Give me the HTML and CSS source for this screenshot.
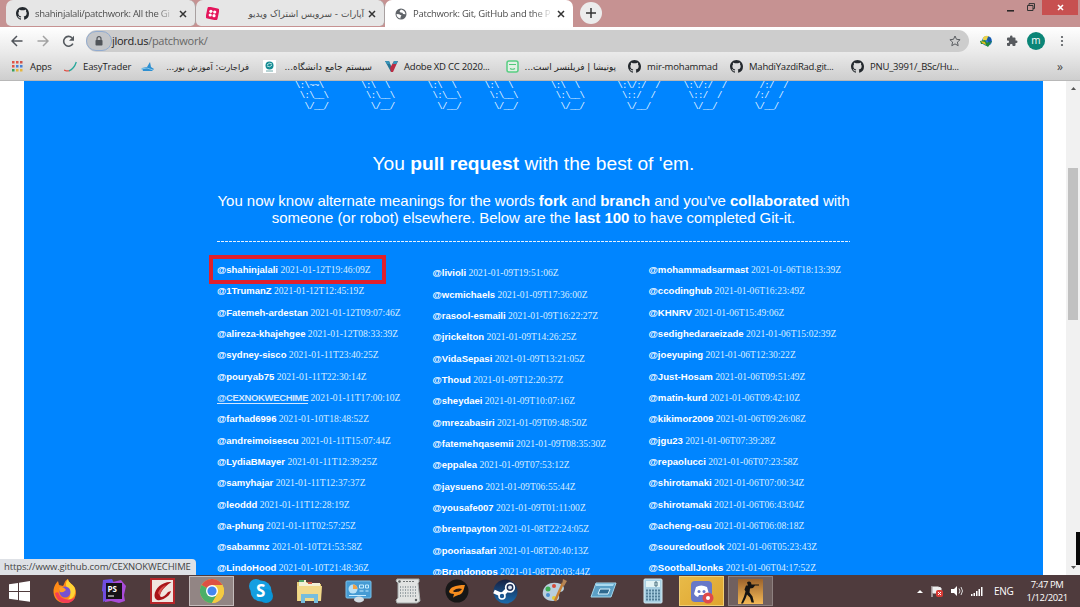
FILE: index.html
```html
<!DOCTYPE html>
<html lang="en">
<head>
<meta charset="utf-8">
<title>Patchwork: Git, GitHub and the People</title>
<link rel="stylesheet" href="styles.css">
</head>
<body>
<svg class="defs" width="0" height="0">
  <symbol id="github" viewBox="0 0 16 16"><path d="M8 0C3.58 0 0 3.58 0 8c0 3.54 2.29 6.53 5.47 7.59.4.07.55-.17.55-.38 0-.19-.01-.82-.01-1.49-2.01.37-2.53-.49-2.69-.94-.09-.23-.48-.94-.82-1.13-.28-.15-.68-.52-.01-.53.63-.01 1.08.58 1.23.82.72 1.21 1.87.87 2.33.66.07-.52.28-.87.51-1.07-1.78-.2-3.64-.89-3.64-3.95 0-.87.31-1.59.82-2.15-.08-.2-.36-1.02.08-2.12 0 0 .67-.21 2.2.82.64-.18 1.32-.27 2-.27s1.36.09 2 .27c1.53-1.04 2.2-.82 2.2-.82.44 1.1.16 1.92.08 2.12.51.56.82 1.27.82 2.15 0 3.07-1.87 3.75-3.65 3.95.29.25.54.73.54 1.48 0 1.07-.01 1.93-.01 2.2 0 .21.15.46.55.38A8.01 8.01 0 0 0 16 8c0-4.42-3.58-8-8-8z" fill="#24292e"/></symbol>
  <symbol id="close" viewBox="0 0 8 8"><path d="M1 1l6 6M7 1L1 7" stroke="#333" stroke-width="1.5"/></symbol>
</svg>
<header class="tabstrip">
  <div class="tab">
    <svg class="favicon" width="13" height="13"><use href="#github"/></svg>
    <span class="tab-title t1">shahinjalali/patchwork: All the Gi</span>
    <svg width="8" height="8"><use href="#close"/></svg>
  </div>
  <div class="tab second">
    <svg class="favicon" width="13" height="13" viewBox="0 0 13 13"><rect x=".5" y=".5" width="12" height="12" rx="2" fill="#e4155b" transform="rotate(12 6.500 6.500)"/><g fill="#fff"><circle cx="4.900" cy="4.300" r="1.600"/><circle cx="8.700" cy="5" r="1.600"/><circle cx="4.200" cy="8" r="1.600"/><circle cx="8" cy="8.700" r="1.600"/></g></svg>
    <span class="tab-title t2" dir="rtl">آپارات - سرویس اشتراک ویدیو</span>
    <svg width="8" height="8"><use href="#close"/></svg>
  </div>
  <div class="tab active">
    <svg class="favicon" width="12" height="12" viewBox="0 0 12 12"><circle cx="6" cy="6" r="5.500" fill="#5f6368"/><path d="M6 1.500L4.500 3.200l1 1.300 2 .2L8 6l2.500.3C10.300 4 9 2 6 1.500zM1.500 6L4 6.300 6.500 7.500 5.500 9v1.500C3 10.300 1.500 8.300 1.500 6z" fill="#fff"/></svg>
    <span class="tab-title t3">Patchwork: Git, GitHub and the P</span>
    <svg width="8" height="8"><use href="#close"/></svg>
  </div>
  <div class="new-tab"><svg width="10" height="10"><path d="M5 0v10M0 5h10" stroke="#333" stroke-width="1.500"/></svg></div>
  <div class="window-buttons">
    <svg width="7" height="8"><path d="M0 6.800h7" stroke="#222" stroke-width="1.500"/></svg>
    <svg width="8" height="9"><path d="M.5 2.500h5.500v5H.5zM2 2.500V.6h5.500v5H6" fill="none" stroke="#333"/></svg>
    <div class="window-close"><svg width="7" height="7"><path d="M1 1l5 5M6 1L1 6" stroke="#fff" stroke-width="1.600"/></svg></div>
  </div>
</header>
<div class="chrome-bars">
  <nav class="toolbar">
    <svg width="12" height="12"><path d="M11.500 6H1.500M6 1L1 6l5 5" fill="none" stroke="#50545a" stroke-width="1.500"/></svg>
    <svg class="forward" width="12" height="12"><path d="M.5 6h10M6 1l5 5-5 5" fill="none" stroke="#a2a2a2" stroke-width="1.500"/></svg>
    <svg class="reload" width="13" height="13"><path d="M10.900 8.600A4.900 4.900 0 1 1 10 2.800" fill="none" stroke="#555a5f" stroke-width="1.600"/><path d="M12 .8V5.700H7z" fill="#555a5f"/></svg>
    <div class="omnibox">
      <span class="lock"><svg width="8" height="10"><rect x=".5" y="4" width="7" height="5.500" rx=".8" fill="#505459"/><path d="M2 4V2.700a2 2 0 0 1 4 0V4" fill="none" stroke="#505459" stroke-width="1.200"/></svg></span>
      <span class="url"><b>jlord.us</b>/patchwork/</span>
      <svg class="star" width="12" height="12" viewBox="0 0 12 12"><path d="M6 1l1.500 3.300 3.600.4-2.700 2.400.8 3.600L6 8.900l-3.200 1.800.8-3.600L.9 4.700l3.600-.4z" fill="none" stroke="#5a5d61"/></svg>
    </div>
    <div class="extensions">
      <svg width="13" height="13" viewBox="0 0 13 13"><circle cx="7" cy="6" r="5" fill="#2f7bd0"/><path d="M3 2.500a5 5 0 0 1 6-1L6.500 5 3 6z" fill="#ead34b"/><path d="M0 6l5-1 2 3 2-2 3 0-4 6-4-3-3 0z" fill="#238a3a"/><path d="M8 1.500l3 1.500v4L9 7.500 7 5z" fill="#1757a8"/><path d="M1 6l4 1 1 3-4-2z" fill="#e1bd24"/></svg>
      <svg width="12" height="12" viewBox="0 0 24 24"><path d="M20.500 11H19V7a2 2 0 0 0-2-2h-4V3.500a2.500 2.500 0 0 0-5 0V5H4a2 2 0 0 0-2 2v3.800h1.500a2.700 2.700 0 0 1 0 5.400H2V20a2 2 0 0 0 2 2h3.800v-1.500a2.700 2.700 0 0 1 5.400 0V22H17a2 2 0 0 0 2-2v-4h1.500a2.500 2.500 0 0 0 0-5z" fill="#575a5e"/></svg>
      <span class="avatar">m</span>
      <svg width="4" height="12"><g fill="#55595d"><circle cx="2" cy="2" r="1.100"/><circle cx="2" cy="6" r="1.100"/><circle cx="2" cy="10" r="1.100"/></g></svg>
    </div>
  </nav>
  <nav class="bookmarks">
    <div class="bm apps"><svg width="13" height="13"><g><path d="M1 1h2.500v2.500H1zM5 1h2.500v2.500H5zM1 5h2.500v2.500H1z" fill="#df5548"/><path d="M9 1h2.500v2.500H9z" fill="#cf5148"/><path d="M5 5h2.500v2.500H5zM9 5h2.500v2.500H9z" fill="#477fd5"/><path d="M1 9h2.500v2.500H1z" fill="#35a05c"/><path d="M5 9h2.500v2.500H5zM9 9h2.500v2.500H9z" fill="#e5b53c"/></g></svg><span>Apps</span></div>
    <div class="bm easy"><svg width="13" height="13"><path d="M0 10Q4 11.500 6 10.500" stroke="#df5146" stroke-width="1.300" fill="none"/><path d="M5 10.800Q10 9 12.300 2" stroke="#26a79a" stroke-width="1.300" fill="none"/></svg><span>EasyTrader</span></div>
    <div class="bm fara"><svg width="13" height="13"><path d="M1 8l5-1 3-5 1 5 3 2-2 2H2z" fill="#2d8fd1"/><path d="M0 9l6-1 6 2" stroke="#83c4e8" fill="none"/></svg><span dir="rtl">فراجارت: آموزش بور...</span></div>
    <div class="bm uni"><svg width="13" height="13"><path fill="#fff" d="M0 0h13v13H0z"/><circle cx="6.500" cy="5.500" r="4" fill="#168c94"/><path d="M4 5q2-3 5-1M4 6q3 2 5-1" stroke="#b9e4e4" fill="none"/><path d="M3 11h7" stroke="#6ba6aa"/></svg><span dir="rtl">سیستم جامع دانشگاه...</span></div>
    <div class="bm adobe"><svg width="13" height="13"><path d="M0 1h4l2.500 6L6 12z" fill="#257596"/><path d="M6 12L5 8 9 1h4L8 12z" fill="#b92c44"/><path d="M0 1h4l1 3H2zM9 1h4l-1.500 3H7.500z" fill="#3993b7"/></svg><span>Adobe XD CC 2020...</span></div>
    <div class="bm poni"><svg width="13" height="13"><rect x="1" y="1" width="11" height="11" rx="2" fill="#e2f0e5" stroke="#58ce82" stroke-width="1.500"/><path d="M3 4.500h7M4 8.500q2.500 1.500 5 0" fill="none" stroke="#50c87b" stroke-width="1.200"/></svg><span dir="rtl">پونیشا | فریلنسر است...</span></div>
    <div class="bm mir"><svg width="13" height="13"><use href="#github"/></svg><span>mir-mohammad</span></div>
    <div class="bm mahdi"><svg width="13" height="13"><use href="#github"/></svg><span>MahdiYazdiRad.git...</span></div>
    <div class="bm pnu"><svg width="13" height="13"><use href="#github"/></svg><span>PNU_3991/_BSc/Hu...</span></div>
    <span class="more">»</span>
  </nav>
</div>
<div class="viewport">
  <main class="page">
<pre class="banner">\:\~~\        \:\  \        \:\  \      \:\  \        \:\  \        \:\/:/  /     \:\/:/  /       /:/  /
 \:\__\        \:\__\        \:\__\      \:\__\        \:\__\        \::/  /       \::/  /       /:/  /
  \/__/         \/__/         \/__/       \/__/         \/__/         \/__/         \/__/        \/__/</pre>
    <h1>You <b>pull request</b> with the best of 'em.</h1>
    <p class="intro">You now know alternate meanings for the words <b>fork</b> and <b>branch</b> and you've <b>collaborated</b> with<br>someone (or robot) elsewhere. Below are the <b>last 100</b> to have completed Git-it.</p>
    <svg class="rule" width="633" height="1"><path d="M0 .5h633" stroke="#e4f2ff" stroke-dasharray="3 1"/></svg>
    <div class="people">
      <ul>
        <li class="marked"><a>@shahinjalali</a> 2021-01-12T19:46:09Z</li>
        <li><a>@1TrumanZ</a> 2021-01-12T12:45:19Z</li>
        <li><a>@Fatemeh-ardestan</a> 2021-01-12T09:07:46Z</li>
        <li><a>@alireza-khajehgee</a> 2021-01-12T08:33:39Z</li>
        <li><a>@sydney-sisco</a> 2021-01-11T23:40:25Z</li>
        <li><a>@pouryab75</a> 2021-01-11T22:30:14Z</li>
        <li><a class="hover">@CEXNOKWECHIME</a> 2021-01-11T17:00:10Z</li>
        <li><a>@farhad6996</a> 2021-01-10T18:48:52Z</li>
        <li><a>@andreimoisescu</a> 2021-01-11T15:07:44Z</li>
        <li><a>@LydiaBMayer</a> 2021-01-11T12:39:25Z</li>
        <li><a>@samyhajar</a> 2021-01-11T12:37:37Z</li>
        <li><a>@leoddd</a> 2021-01-11T12:28:19Z</li>
        <li><a>@a-phung</a> 2021-01-11T02:57:25Z</li>
        <li><a>@sabammz</a> 2021-01-10T21:53:58Z</li>
        <li><a>@LindoHood</a> 2021-01-10T21:48:36Z</li>
      </ul>
      <ul class="lower">
        <li><a>@livioli</a> 2021-01-09T19:51:06Z</li>
        <li><a>@wcmichaels</a> 2021-01-09T17:36:00Z</li>
        <li><a>@rasool-esmaili</a> 2021-01-09T16:22:27Z</li>
        <li><a>@jrickelton</a> 2021-01-09T14:26:25Z</li>
        <li><a>@VidaSepasi</a> 2021-01-09T13:21:05Z</li>
        <li><a>@Thoud</a> 2021-01-09T12:20:37Z</li>
        <li><a>@sheydaei</a> 2021-01-09T10:07:16Z</li>
        <li><a>@mrezabasiri</a> 2021-01-09T09:48:50Z</li>
        <li><a>@fatemehqasemii</a> 2021-01-09T08:35:30Z</li>
        <li><a>@eppalea</a> 2021-01-09T07:53:12Z</li>
        <li><a>@jaysueno</a> 2021-01-09T06:55:44Z</li>
        <li><a>@yousafe007</a> 2021-01-09T01:11:00Z</li>
        <li><a>@brentpayton</a> 2021-01-08T22:24:05Z</li>
        <li><a>@pooriasafari</a> 2021-01-08T20:40:13Z</li>
        <li><a>@Brandonops</a> 2021-01-08T20:03:44Z</li>
      </ul>
      <ul class="third">
        <li><a>@mohammadsarmast</a> 2021-01-06T18:13:39Z</li>
        <li><a>@ccodinghub</a> 2021-01-06T16:23:49Z</li>
        <li><a>@KHNRV</a> 2021-01-06T15:49:06Z</li>
        <li><a>@sedighedaraeizade</a> 2021-01-06T15:02:39Z</li>
        <li><a>@joeyuping</a> 2021-01-06T12:30:22Z</li>
        <li><a>@Just-Hosam</a> 2021-01-06T09:51:49Z</li>
        <li><a>@matin-kurd</a> 2021-01-06T09:42:10Z</li>
        <li><a>@kikimor2009</a> 2021-01-06T09:26:08Z</li>
        <li><a>@jgu23</a> 2021-01-06T07:39:28Z</li>
        <li><a>@repaolucci</a> 2021-01-06T07:23:58Z</li>
        <li><a>@shirotamaki</a> 2021-01-06T07:00:34Z</li>
        <li><a>@shirotamaki</a> 2021-01-06T06:43:04Z</li>
        <li><a>@acheng-osu</a> 2021-01-06T06:08:18Z</li>
        <li><a>@souredoutlook</a> 2021-01-06T05:23:43Z</li>
        <li><a>@SootballJonks</a> 2021-01-06T04:17:52Z</li>
      </ul>
    </div>
  </main>
  <div class="scrollbar">
    <svg width="7" height="5"><path d="M1 4l2.500-3L6 4z" fill="#555"/></svg>
    <div class="thumb"></div>
    <svg width="7" height="5"><path d="M1 1l2.500 3L6 1z" fill="#555"/></svg>
  </div>
  <div class="edge-widget"></div>
  <div class="status">https://www.github.com/CEXNOKWECHIME</div>
</div>
<footer class="taskbar">
  <div class="start"><svg width="22" height="21"><path d="M0 3.200l9-1.300v8.100H0zM10 1.700L21 0v10H10zM0 11h9v8L0 17.800zM10 11h11v9.800L10 19.200z" fill="#fff"/></svg></div>
  <div class="task"><svg width="26" height="26" viewBox="0 0 26 26"><path d="M13 25C5 25 1 19 1.500 12 2 8 4 5 6 3l1 4 4 1c2-3 1-5 5-7 0 4 5 5 7 9 3 7-1 15-10 15z" fill="#ff8a16"/><path d="M16 1c0 4 6 5 7 10 1 5-2 11-8 11 5-3 4-9 0-12-1-3-2-5 1-9z" fill="#ffd536"/><path d="M3 15c1 6 5 10 11 10 4 0 8-2 9-6-4 4-12 3-15-1-2-3-1-5-5-3z" fill="#f33e57"/><circle cx="13" cy="14" r="5.500" fill="#7651d2"/><path d="M7 10c2-2 5-1 7 2-2 1-2 3-6 2z" fill="#ff9d27"/></svg></div>
  <div class="task"><svg width="26" height="26" viewBox="0 0 26 26"><path d="M2 2l9-1 2 4-9 10-3-2z" fill="#6b52ee"/><path d="M12 4l8-2 5 6-2 9 1 6-6 2-8-2-6 1-2-11z" fill="#a94bd9"/><path d="M2 2l9 3-5 17-4 2z" fill="#704ddf"/><path d="M5 5h16v16H5z" fill="#161216"/><text x="6.500" y="14" class="ps">PS</text><path d="M7 18h6" stroke="#fff"/></svg></div>
  <div class="task"><svg width="25" height="26"><path d="M1 1h23v24H1z" fill="#f0e5df" stroke="#b5262a" stroke-width="2"/><path d="M21.500 4C13 3 5 10 4.500 17c0 6 5 6 9 4 4-2 7-5 7.500-8l-3 1c-2 3-5 5-7 5-3-1 1-9 10.500-15z" fill="#a91318"/><path d="M8 15c2-5 5-7 8-8-4 4-6 8-6 11z" fill="#d9504d"/></svg></div>
  <div class="task open"><svg width="24" height="24" viewBox="0 0 24 24"><circle cx="12" cy="12" r="12" fill="#f3c73b"/><path d="M12 12L1.600 6A12 12 0 0 1 22.400 6z" fill="#dd5144"/><path d="M1.600 6A12 12 0 0 0 12 24l5.200-9L12 12z" fill="#4caf68"/><path d="M12 6h10.400A12 12 0 0 1 12 24l5-8z" fill="#f3ca42"/><circle cx="12" cy="12" r="6" fill="#fff"/><circle cx="12" cy="12" r="4.600" fill="#4386ef"/></svg></div>
  <div class="task"><svg width="26" height="26" viewBox="0 0 26 26"><circle cx="13" cy="13" r="10.500" fill="#149ee0"/><circle cx="8" cy="8" r="7" fill="#159fe1"/><circle cx="18" cy="18" r="7" fill="#0995d8"/><text x="8" y="19" class="skype">S</text></svg></div>
  <div class="task"><svg width="27" height="25"><path d="M1 3h10l2 2h12v17H1z" fill="#e8cf78"/><path d="M3 1h7v3h14v4H3z" fill="#f2f0d5"/><path d="M3 2h5" stroke="#52a865" stroke-width="2"/><path d="M12 4h4" stroke="#cf5b49" stroke-width="2"/><path d="M1 7h25l-1 15H2z" fill="#f1d98a"/><path d="M5 24V15h17v9h-4v-5h-9v5z" fill="#75bddd"/></svg></div>
  <div class="task"><svg width="27" height="24"><rect x="1" y="2" width="25" height="17" rx="1" fill="#469bd4" stroke="#79c2ec"/><circle cx="8" cy="10" r="4.500" fill="#b9e0f5"/><path d="M8 10V5.500a4.500 4.500 0 0 1 4.500 4.500z" fill="#f2a347"/><path d="M14.500 6h4v3h-4zM20.500 6h3v3h-3zM14.500 12h4M20.500 12h3M4 16.500h17" stroke="#c7ecff" fill="none"/><ellipse cx="14" cy="20.500" rx="5" ry="3" fill="#d2dce3"/></svg></div>
  <div class="task"><svg width="26" height="26"><path d="M2 1h22v3l-1 1 2 18-3 2H2L1 22l2-2V5L1 3z" fill="#e1e3e2" stroke="#a7adad"/><path d="M8 3.500h12" stroke="#6f7475" stroke-dasharray="2 1"/><circle cx="4.500" cy="3.500" r="1.300" fill="#5a5f60"/><circle cx="21" cy="22" r="1.200" fill="#5a5f60"/><path d="M5.500 8v11M8 8v11M10.500 8v11M13 8v11M15.500 8v11M18 8v11M20.500 8v11" stroke="#98a1a5" stroke-dasharray="2 1"/></svg></div>
  <div class="task"><svg width="24" height="24"><circle cx="12" cy="12" r="11.500" fill="#171717"/><path d="M4 13c1-5 6-7 16-7-1 3-1 5-3 8-3 3-7 2-9 5l1-4c-3 0-4-1-5-2z" fill="#f68d1e"/><path d="M8 12c3-3 7-3 9-2-2 3-5 3-8 3z" fill="#261b14"/></svg></div>
  <div class="task"><svg width="25" height="25"><defs><linearGradient id="steam" x2="0" y2="1"><stop stop-color="#152042"/><stop offset="1" stop-color="#1a6cae"/></linearGradient></defs><circle cx="12.500" cy="12.500" r="12" fill="url(#steam)"/><path d="M1 12.500l8 3.500 6-6" fill="none" stroke="#fff" stroke-width="4"/><circle cx="17" cy="8.500" r="4.300" fill="#1b2c54" stroke="#fff" stroke-width="1.700"/><circle cx="17" cy="8.500" r="2" fill="#dfe6ee"/><circle cx="9" cy="17" r="3" fill="#1a5791" stroke="#fff" stroke-width="1.600"/></svg></div>
  <div class="task"><svg width="27" height="26"><path d="M2 13C4 5 12 3 20 6c5 3 3 8-1 8-3 2 1 5-2 8C8 25 0 20 2 13z" fill="#b9cfdc"/><circle cx="7" cy="11" r="2.500" fill="#3eae54"/><circle cx="13" cy="8" r="2" fill="#d64b39"/><circle cx="7" cy="17" r="2" fill="#4a8dd0"/><circle cx="13" cy="20" r="2" fill="#e4ca34"/><path d="M14 23L22 5" stroke="#c77e31" stroke-width="2.500"/><path d="M21 7l1-6 4 2-3 5z" fill="#b68555"/></svg></div>
  <div class="task"><svg width="27" height="22"><path d="M6 3h20l-5 14H1z" fill="#5b9fc5" stroke="#a1d6ec"/><path d="M6 4h18l-1 2H6z" fill="#a9d9ef"/><path d="M10 9h10l-2 5H8z" fill="#2f698f" stroke="#dbf4ff"/></svg></div>
  <div class="task"><svg width="20" height="26"><rect x="1" y="1" width="18" height="24" rx="1" fill="#a8cfe2" stroke="#d1e9f2"/><path d="M3 3h14v6H3z" fill="#e1f2f4"/><path d="M12 4h2v4h-2z" fill="none" stroke="#456a7a"/><path d="M3 12.500h14M3 15.500h14M3 18.500h14M3 21.500h14" stroke="#527e98" stroke-width="2" stroke-dasharray="2 1"/></svg></div>
  <div class="task alert"><svg width="25" height="25"><rect x="2" y="2" width="21" height="21" rx="4" fill="#6878c7"/><path d="M7 8q5-3 11 0l2 7q-2 3-4 3l-1-2h-5l-1 2q-2 0-4-3z" fill="#fff"/><circle cx="10" cy="12.500" r="1.500" fill="#6878c7"/><circle cx="15" cy="12.500" r="1.500" fill="#6878c7"/><circle cx="19" cy="19" r="5.500" fill="#df4a4a"/><circle cx="19" cy="19" r="2" fill="#fff"/></svg></div>
  <div class="task running"><svg width="25" height="25"><defs><linearGradient id="sand" x2="0" y2="1"><stop stop-color="#9c632c"/><stop offset="1" stop-color="#f4b956"/></linearGradient></defs><path d="M0 0h25v25H0z" fill="url(#sand)"/><path d="M9 3.500q2-2 4 0l.5 2h7.500v1h-4l-2 2.500-3 .5-.5 4 3 4 1.500 6h-2.500l-1.500-5-3-3-1.500 4-2.500 5H3l3-7 1.500-5-1-2 1.500-4h2z" fill="#151412"/></svg></div>
  <div class="tray">
    <svg width="8" height="5"><path d="M1 4l3-3 3 3z" fill="#fff"/></svg>
    <svg width="13" height="13"><path d="M1 1v11M2 2h5l3 1v5H2z" stroke="#eee" fill="#eee"/><rect x="5" y="5" width="7" height="7" rx="2" fill="#d93a35"/><path d="M7 7l3 3M10 7l-3 3" stroke="#fff"/></svg>
    <svg width="12" height="12"><path d="M0 4h3l3-3v10L3 8H0z" fill="#fff"/><path d="M8 3.500q2 2.500 0 5M10 2q3 4 0 8" fill="none" stroke="#ddd"/></svg>
    <svg width="13" height="11"><path d="M1 8h1.500v2H1zM3.500 7H5v3H3.500zM6 5h1.500v5H6zM8.500 3H10v7H8.500zM11 1h1.500v9H11z" fill="#fff"/></svg>
    <span class="lang">ENG</span>
    <span class="clock">7:47 PM<br>1/12/2021</span>
  </div>
</footer>
</body>
</html>
```

FILE: styles.css
```css
*, *::after { box-sizing: border-box; }
body {
  margin: 0;
  width: 1080px;
  height: 607px;
  overflow: hidden;
  display: flex;
  flex-direction: column;
  background: #fff;
  font-family: "Open Sans", "DejaVu Sans", sans-serif;
  font-size: 9.5px;
  color: #222;
}
svg { display: block; flex: none; }
.defs { position: absolute; }

/* Tabs */
.tabstrip { height: 27px; flex: none; display: flex; padding-left: 6px; background: #c69292; }
.tab { width: 190px; height: 26px; display: flex; align-items: center; padding: 1px 8px 0 10px; background: #e6e6e6; border-radius: 7px 7px 5px 5px; border-right: 1px solid #a8a0a0; }
.tab.second { width: 189px; }
.tab.active { width: 188px; height: 27px; background: #fff; border: 0; border-radius: 7px 7px 0 0; }
.tab-title { flex: 1; margin: 0 7px 0 6px; white-space: nowrap; color: #4c4c4c; line-height: 18px; }
.t1, .t3 { -webkit-mask-image: linear-gradient(90deg, #000 88%, rgba(0, 0, 0, 0.15)); mask-image: linear-gradient(90deg, #000 88%, rgba(0, 0, 0, 0.15)); letter-spacing: -0.3px; }
.t3 { letter-spacing: -0.25px; }
.t2 { font-family: "DejaVu Sans", sans-serif; font-size: 9px; margin-right: 4px; }
.new-tab { width: 22px; height: 22px; margin: 2px 0 0 7px; border-radius: 50%; background: #ececec; display: flex; align-items: center; justify-content: center; }
.window-buttons { margin-left: auto; margin-right: 2px; display: flex; height: 15px; align-items: center; }
.window-buttons > svg:first-child { margin-right: 13px; }
.window-buttons > svg:nth-child(2) { margin-right: 7px; }
.window-close { width: 36px; height: 15px; background: #c75050; display: flex; align-items: center; justify-content: center; }

/* Toolbar and bookmarks */
.chrome-bars { flex: none; height: 54px; background: linear-gradient(#fff, #e9e9e9 50%, #cecece); border-bottom: 1px solid #b8b8b8; }
.toolbar { height: 28px; display: flex; align-items: center; padding-left: 11px; }
.forward { margin-left: 14px; }
.reload { margin-left: 13px; }
.omnibox { margin-left: 11px; width: 883px; height: 22px; border-radius: 11px; background: #cdcdcd; display: flex; align-items: center; }
.lock { width: 26px; height: 20px; border: 1.5px solid #91abd0; border-radius: 10px; background: #c4c6c9; display: flex; align-items: center; justify-content: center; }
.url { font-size: 11px; letter-spacing: -0.27px; color: #666; line-height: 20px; }
.url b { font-weight: 400; color: #222; }
.star { margin-left: auto; margin-right: 8px; }
.extensions { flex: 1; display: flex; align-items: center; padding-left: 11px; }
.extensions > svg:nth-child(2) { margin-left: 13px; }
.avatar { width: 18px; height: 18px; border-radius: 50%; background: #0b8577; color: #fff; font-size: 10px; line-height: 16px; text-align: center; margin: 0 15px 0 9px; }
.bookmarks { height: 23px; display: flex; align-items: center; padding-left: 11px; white-space: nowrap; }
.bm { display: flex; align-items: center; gap: 6px; flex: none; color: #222; letter-spacing: -0.22px; }
.bm span { line-height: 18px; }
.apps { width: 53px; }
.easy { width: 77px; }
.fara { width: 122px; }
.uni { width: 122px; }
.adobe { width: 121px; }
.poni { width: 122px; }
.mir { width: 102px; letter-spacing: -0.15px; }
.mahdi { width: 121px; }
.pnu { width: 206px; }
.apps, .easy { letter-spacing: -0.1px; }
.fara, .uni, .poni { letter-spacing: normal; }
.fara span, .uni span, .poni span { font-family: "DejaVu Sans", sans-serif; font-size: 8.9px; }
.fara .fara, .fara span { width: 89px; font-size: 8.4px; }
.uni span { width: 90px; }
.poni span { width: 91px; }
.more { font-size: 12px; color: #444; }

/* Page */
.viewport { flex: none; height: 494px; position: relative; display: flex; overflow: hidden; padding-left: 24px; }
.page { width: 1019px; background: #0085ff; color: #fff; overflow: hidden; padding: 0 193px; }
.banner { margin: 0 0 0 78px; font: 9px/10.3px "Liberation Mono", monospace; letter-spacing: -0.66px; color: #e6f4ff; }
.page h1 { margin: 40px 0 0; font: 400 19.2px/24px "Liberation Sans", sans-serif; text-align: center; white-space: nowrap; }
.intro { margin: 16px 0 0; padding-bottom: 14px; font: 15px/17.5px "Liberation Sans", sans-serif; letter-spacing: -0.035px; text-align: center; white-space: nowrap; }
.people { display: grid; grid-template-columns: 215.5px 216px 201px; padding-top: 17px; }
.people ul { list-style: none; margin: 0; padding: 0; }
.people .lower { padding-top: 3.5px; }
.people li { height: 21.33px; font: 9.55px/21.33px "Liberation Serif", serif; color: #d9eeff; white-space: nowrap; }
.people a { font-family: "Liberation Sans", sans-serif; font-weight: 700; color: #fff; font-size: 9.5px; }
.people .third a { font-size: 9.6px; }
.people .hover { color: #d4e7ff; border-bottom: 1px solid #d4e7ff; letter-spacing: -0.33px; }
.people .marked { position: relative; }
.marked::after { content: ""; position: absolute; left: -8px; top: -4px; width: 177px; height: 29px; border: 4px solid #e0202c; }
.scrollbar { margin-left: auto; width: 14px; background: #f1f1f1; display: flex; flex-direction: column; align-items: center; padding: 5px 0; }
.thumb { width: 10px; height: 152px; margin: 77px 0 auto; background: #c1c1c1; }
.edge-widget { position: absolute; right: 0; top: 451px; width: 4px; height: 33px; background: #080808; }
.status { position: absolute; left: 0; bottom: 0; width: 196px; height: 16px; padding-left: 4px; line-height: 15px; font-size: 9.5px; letter-spacing: -0.12px; background: #dee1e6; color: #444; border-top-right-radius: 4px; white-space: nowrap; }

/* Taskbar */
.taskbar { flex: none; height: 32px; display: flex; align-items: center; background: #4f3b3d; color: #fff; }
.start { width: 40px; display: flex; justify-content: center; }
.task { width: 45px; height: 30px; margin: 0 2px; display: flex; align-items: center; justify-content: center; border: 1px solid transparent; }
.task + .task { margin-left: 2px; }
.open { background: #928584; border-color: #c4bcbb; }
.alert { background: linear-gradient(135deg, #e8ba48, #dfa52f); border-color: #f0cf76; }
.running { background: #70605f; border-color: #8e8180; }
.ps { font: 700 8px "Open Sans", sans-serif; fill: #fff; }
.skype { font: 700 17px "Open Sans", sans-serif; fill: #fff; }
.tray { margin-left: auto; display: flex; align-items: center; width: 164px; gap: 7px; }
.lang { font-size: 10px; letter-spacing: -0.3px; margin-left: 4px; }
.clock { font-size: 9.5px; letter-spacing: -0.4px; line-height: 13px; text-align: center; margin-left: 6px; white-space: nowrap; }
```
